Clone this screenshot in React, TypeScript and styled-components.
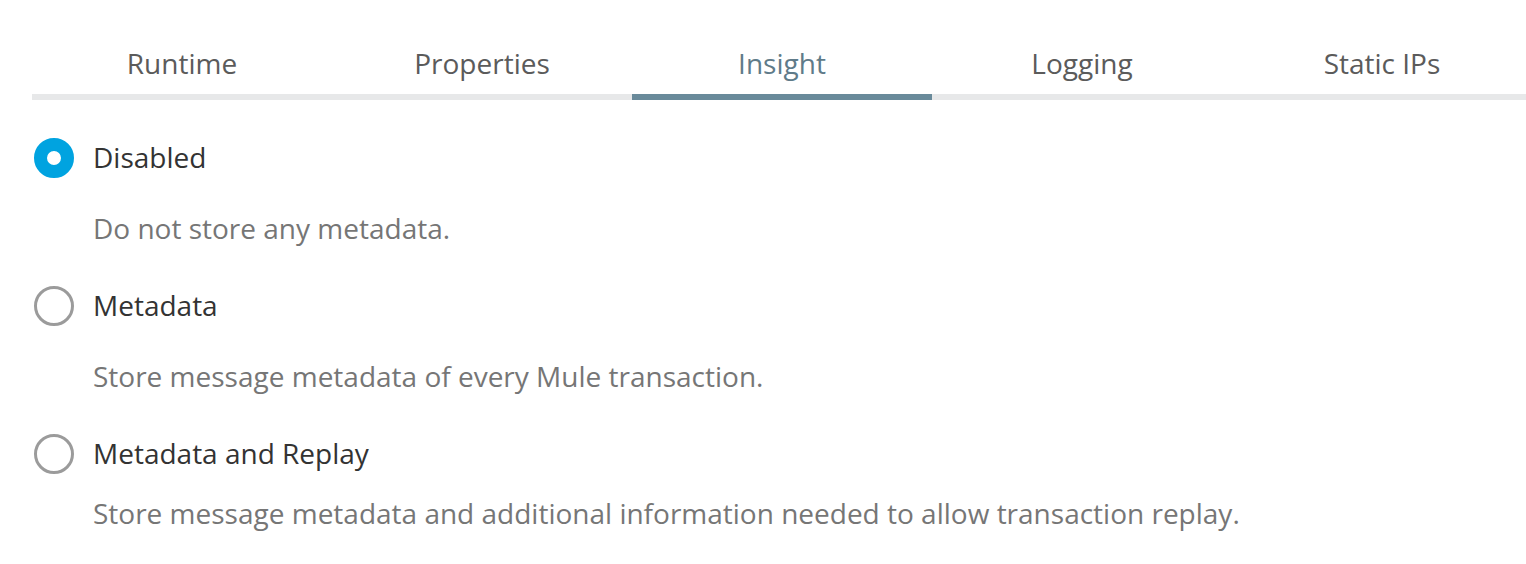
import React from 'react';
import styled, { createGlobalStyle } from 'styled-components';

const GlobalStyle = createGlobalStyle`
  body {
    margin: 0;
    background: #ffffff;
    font-family: 'Open Sans', 'Liberation Sans', sans-serif;
    overflow: hidden;
  }
`;

const Page = styled.div`
  padding: 0 0 0 32px;
  overflow: hidden;
`;

const TabList = styled.div`
  display: flex;
  border-bottom: 6px solid #e7e8e9;
  width: 1500px;
`;

const Tab = styled.div<{ $active?: boolean }>`
  flex: 0 0 300px;
  text-align: center;
  padding-top: 45px;
  padding-bottom: 13px;
  margin-bottom: -6px;
  font-size: 28px;
  line-height: 36px;
  color: ${(p) => (p.$active ? '#5f7b89' : '#5b5b5b')};
  border-bottom: 6px solid ${(p) => (p.$active ? '#698a9a' : 'transparent')};
  cursor: pointer;
`;

const Options = styled.div`
  display: flex;
  flex-direction: column;
  padding-top: 38px;
`;

const Option = styled.div`
  & + & {
    margin-top: 40px;
  }
`;

const Row = styled.label`
  display: flex;
  align-items: flex-start;
  gap: 19px;
  padding-left: 2px;
  cursor: pointer;
`;

const Radio = styled.span<{ $checked?: boolean }>`
  box-sizing: border-box;
  width: 40px;
  height: 40px;
  flex: 0 0 40px;
  border-radius: 50%;
  border: ${(p) => (p.$checked ? '13px solid #00a3e0' : '3px solid #9b9b9b')};
  background: #ffffff;
`;

const Label = styled.span`
  padding-top: 1px;
  font-size: 28px;
  line-height: 36px;
  color: #333333;
`;

const Description = styled.div<{ $tight?: boolean }>`
  margin-top: ${(p) => (p.$tight ? '21px' : '32px')};
  padding-left: 61px;
  font-size: 28px;
  line-height: 36px;
  color: #767676;
`;

const tabs = ['Runtime', 'Properties', 'Insight', 'Logging', 'Static IPs'];

const options = [
  { label: 'Disabled', desc: 'Do not store any metadata.', checked: true },
  { label: 'Metadata', desc: 'Store message metadata of every Mule transaction.' },
  {
    label: 'Metadata and Replay',
    desc: 'Store message metadata and additional information needed to allow transaction replay.',
    tight: true,
  },
];

const App = () => {
  return (
    <>
      <GlobalStyle />
      <Page>
        <TabList>
          {tabs.map((t) => (
            <Tab key={t} $active={t === 'Insight'}>
              {t}
            </Tab>
          ))}
        </TabList>
        <Options>
          {options.map((o) => (
            <Option key={o.label}>
              <Row>
                <Radio $checked={o.checked} />
                <Label>{o.label}</Label>
              </Row>
              <Description $tight={o.tight}>{o.desc}</Description>
            </Option>
          ))}
        </Options>
      </Page>
    </>
  );
};

export default App;
